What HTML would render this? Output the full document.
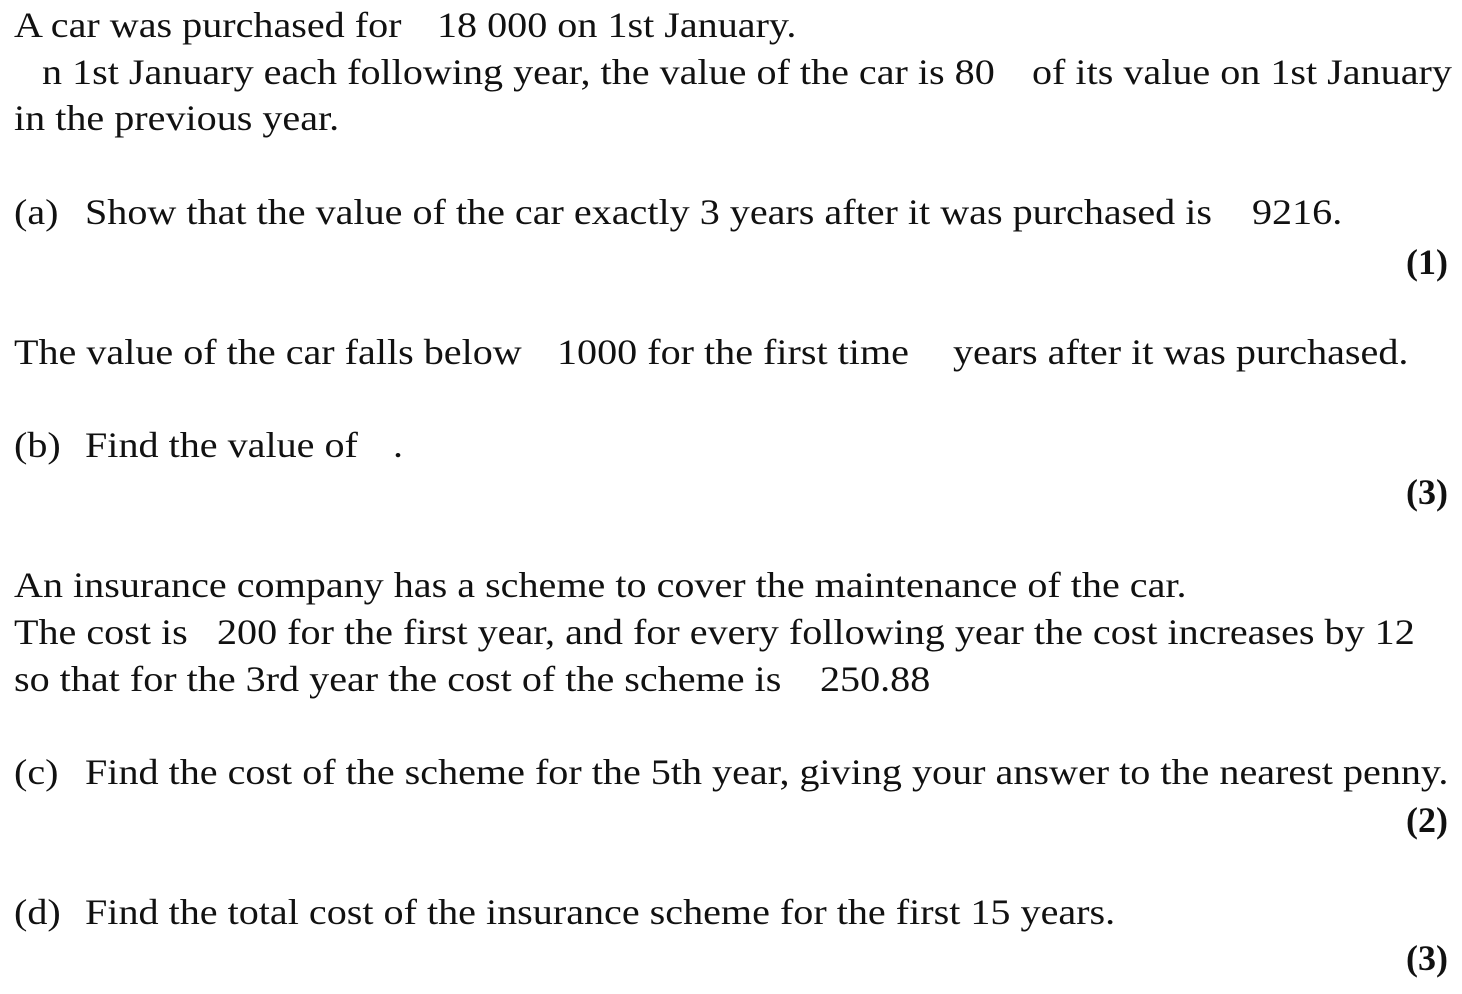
<!DOCTYPE html>
<html><head><meta charset="utf-8"><style>
html,body{margin:0;padding:0;background:#fff;}
body{width:1462px;height:994px;position:relative;overflow:hidden;font-family:"Liberation Serif","Times New Roman",serif;font-size:36px;color:#111;}
.s{position:absolute;white-space:nowrap;line-height:46px;transform:scaleX(1.114);transform-origin:0 0;}
.b{font-weight:bold;right:14px;transform:none;}
</style></head><body>
<div class="s" style="left:14px;top:2px">A car was purchased for</div>
<div class="s" style="left:437px;top:2px">18 000 on 1st January.</div>
<div class="s" style="left:42px;top:49px">n 1st January each following year, the value of the car is 80</div>
<div class="s" style="left:1032px;top:49px">of its value on 1st January</div>
<div class="s" style="left:14px;top:95px">in the previous year.</div>

<div class="s" style="left:14px;top:189px">(a)</div>
<div class="s" style="left:85px;top:189px">Show that the value of the car exactly 3 years after it was purchased is</div>
<div class="s" style="left:1252px;top:189px">9216.</div>
<div class="s b" style="top:239px">(1)</div>

<div class="s" style="left:14px;top:329px">The value of the car falls below</div>
<div class="s" style="left:557px;top:329px">1000 for the first time</div>
<div class="s" style="left:953px;top:329px">years after it was purchased.</div>

<div class="s" style="left:14px;top:422px">(b)</div>
<div class="s" style="left:85px;top:422px">Find the value of</div>
<div class="s" style="left:393px;top:422px">.</div>
<div class="s b" style="top:469px">(3)</div>

<div class="s" style="left:14px;top:562px">An insurance company has a scheme to cover the maintenance of the car.</div>
<div class="s" style="left:14px;top:609px">The cost is</div>
<div class="s" style="left:217px;top:609px">200 for the first year, and for every following year the cost increases by 12</div>
<div class="s" style="left:14px;top:656px">so that for the 3rd year the cost of the scheme is</div>
<div class="s" style="left:820px;top:656px">250.88</div>

<div class="s" style="left:14px;top:749px">(c)</div>
<div class="s" style="left:85px;top:749px">Find the cost of the scheme for the 5th year, giving your answer to the nearest penny.</div>
<div class="s b" style="top:797px">(2)</div>

<div class="s" style="left:14px;top:889px">(d)</div>
<div class="s" style="left:85px;top:889px">Find the total cost of the insurance scheme for the first 15 years.</div>
<div class="s b" style="top:935px">(3)</div>
</body></html>
